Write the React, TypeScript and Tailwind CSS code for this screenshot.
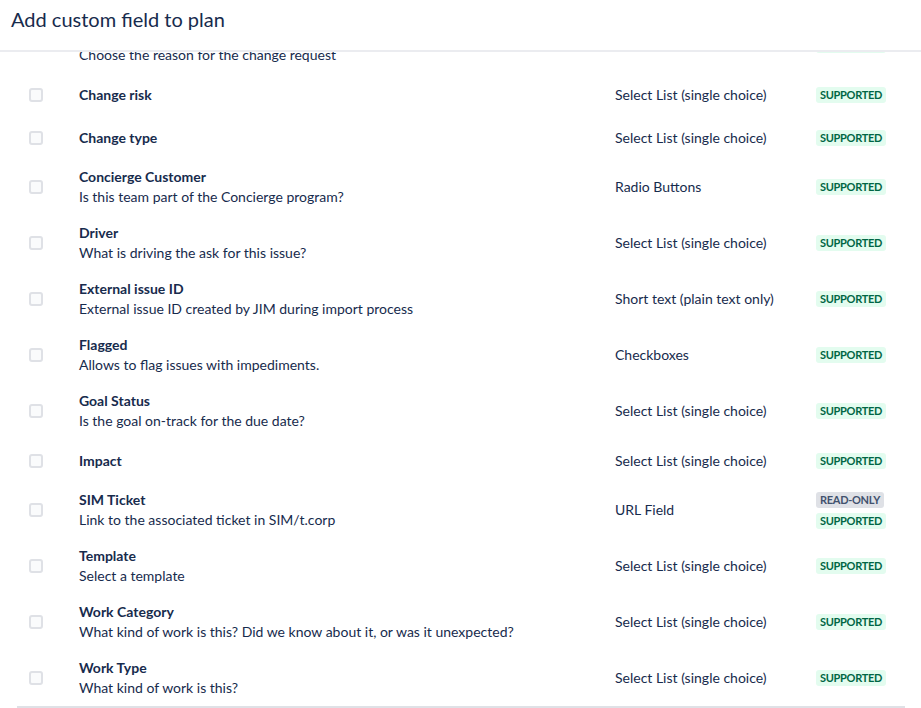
import React from "react";

type Row = { title: string; desc?: string; type: string; badges: ("SUPPORTED" | "READ-ONLY")[] };

const rows: Row[] = [
  { title: "Change reason", desc: "Choose the reason for the change request", type: "Select List (single choice)", badges: ["SUPPORTED"] },
  { title: "Change risk", type: "Select List (single choice)", badges: ["SUPPORTED"] },
  { title: "Change type", type: "Select List (single choice)", badges: ["SUPPORTED"] },
  { title: "Concierge Customer", desc: "Is this team part of the Concierge program?", type: "Radio Buttons", badges: ["SUPPORTED"] },
  { title: "Driver", desc: "What is driving the ask for this issue?", type: "Select List (single choice)", badges: ["SUPPORTED"] },
  { title: "External issue ID", desc: "External issue ID created by JIM during import process", type: "Short text (plain text only)", badges: ["SUPPORTED"] },
  { title: "Flagged", desc: "Allows to flag issues with impediments.", type: "Checkboxes", badges: ["SUPPORTED"] },
  { title: "Goal Status", desc: "Is the goal on-track for the due date?", type: "Select List (single choice)", badges: ["SUPPORTED"] },
  { title: "Impact", type: "Select List (single choice)", badges: ["SUPPORTED"] },
  { title: "SIM Ticket", desc: "Link to the associated ticket in SIM/t.corp", type: "URL Field", badges: ["READ-ONLY", "SUPPORTED"] },
  { title: "Template", desc: "Select a template", type: "Select List (single choice)", badges: ["SUPPORTED"] },
  { title: "Work Category", desc: "What kind of work is this? Did we know about it, or was it unexpected?", type: "Select List (single choice)", badges: ["SUPPORTED"] },
  { title: "Work Type", desc: "What kind of work is this?", type: "Select List (single choice)", badges: ["SUPPORTED"] },
];

function Badge({ kind }: { kind: "SUPPORTED" | "READ-ONLY" }) {
  return kind === "SUPPORTED" ? (
    <span className="inline-block rounded-[3px] bg-[#e3fcef] px-[4px] text-[11px] font-bold leading-[16px] tracking-[-0.3px] text-[#006644]">SUPPORTED</span>
  ) : (
    <span className="inline-block rounded-[3px] bg-[#dfe1e6] px-[4px] text-[11px] font-bold leading-[16px] tracking-[-0.3px] text-[#42526e]">READ-ONLY</span>
  );
}

export default function App() {
  return (
    <div className="flex h-[708px] w-[921px] flex-col overflow-hidden bg-white text-[#172b4d]" style={{ fontFamily: 'Lato, "Noto Sans", sans-serif' }}>
      <div className="relative z-10 flex h-[52px] shrink-0 items-start border-b-2 border-[#ebecf0] bg-white pl-[11px] pt-[5px]">
        <h1 className="text-[20px] font-normal leading-[28px] text-[#172b4d]">Add custom field to plan</h1>
      </div>
      <div className="flex-1 overflow-hidden pl-[17px] pr-[16px]">
        <div className="-mt-[35px] border-b-2 border-[#dfe1e6]">
          {rows.map((r) => (
            <div key={r.title} className={`grid grid-cols-[62px_536px_201px_1fr] items-center ${r.desc ? "min-h-[56px]" : "min-h-[43px]"}`}>
              <div className="pl-[12px]">
                <div className="h-[14px] w-[14px] rounded-[3px] border-2 border-[#dfe1e6] bg-[#fafbfc]" />
              </div>
              <div className="text-[14px] leading-[20px]">
                <div className="font-bold">{r.title}</div>
                {r.desc && <div>{r.desc}</div>}
              </div>
              <div className="text-[14px] leading-[20px]">{r.type}</div>
              <div className="flex flex-col items-start gap-[5px]">
                {r.badges.map((b) => (
                  <Badge key={b} kind={b} />
                ))}
              </div>
            </div>
          ))}
        </div>
      </div>
    </div>
  );
}
